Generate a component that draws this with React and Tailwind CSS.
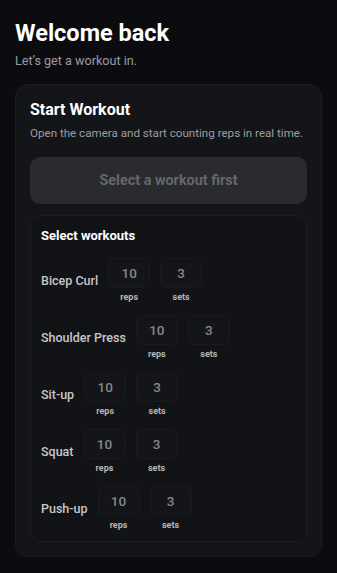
const workouts = [
  { name: "Bicep Curl", reps: 10, sets: 3 },
  { name: "Shoulder Press", reps: 10, sets: 3 },
  { name: "Sit-up", reps: 10, sets: 3 },
  { name: "Squat", reps: 10, sets: 3 },
  { name: "Push-up", reps: 10, sets: 3 },
];

function NumberBox({ value, label }) {
  return (
    <div className="flex w-[42px] flex-col items-center">
      <div className="flex h-[30px] w-full items-center justify-center rounded-md border border-[#1a1b20] bg-[#141519] text-[13.5px] font-medium text-[#86878c]">
        {value}
      </div>
      <span className="mt-[3px] text-[9px] font-bold leading-[13px] text-[#b4b5b9]">{label}</span>
    </div>
  );
}

export default function App() {
  return (
    <div
      className="min-h-[573px] bg-[#0c0c10] px-[15px] pb-4 pt-[19px]"
      style={{ fontFamily: "Roboto, 'Noto Sans', sans-serif" }}
    >
      <h1 className="text-[23.5px] font-bold leading-[28px] text-white">Welcome back</h1>
      <p className="mt-[6px] text-[12.6px] leading-[16px] text-[#9a9ba0]">Let’s get a workout in.</p>

      <div className="mt-[15px] rounded-[13px] border border-[#1c1d23] bg-[#141519] px-[14px] pb-[14px] pt-[15px]">
        <h2 className="text-[16px] font-bold leading-[20px] text-white">Start Workout</h2>
        <p className="mt-[6px] text-[11.6px] leading-[15px] text-[#9d9ea3]">
          Open the camera and start counting reps in real time.
        </p>

        <button className="mt-[16px] flex h-[47px] w-full items-center justify-center rounded-[10px] bg-[#2a2b31] text-[14.4px] font-bold text-[#66676c]">
          Select a workout first
        </button>

        <div className="mt-[11px] rounded-[10px] border border-[#1d1e24] bg-[#121317] px-[10px] pb-[9px] pt-[12px]">
          <h3 className="text-[13px] font-bold leading-[16px] text-white">Select workouts</h3>
          <div className="mt-[14px] flex flex-col gap-[11px]">
            {workouts.map((w) => (
              <div key={w.name} className="flex items-center gap-[10px]">
                <span className="text-[12.5px] font-medium text-[#c6c7cb]">{w.name}</span>
                <NumberBox value={w.reps} label="reps" />
                <NumberBox value={w.sets} label="sets" />
              </div>
            ))}
          </div>
        </div>
      </div>
    </div>
  );
}
